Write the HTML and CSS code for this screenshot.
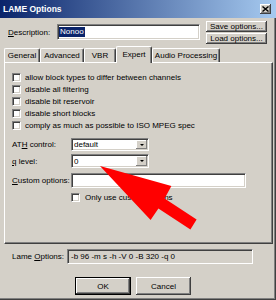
FILE: index.html
```html
<!DOCTYPE html>
<html lang="en">
<head>
  <meta charset="UTF-8" />
  <title>LAME Options</title>
  <link rel="stylesheet" href="styles.css">
</head>
<body>

  <div class="window">
    <div class="titlebar">
      <span class="title">LAME Options</span>
      <span class="close">
        <svg width="7" height="6" viewBox="0 0 7 6"><path d="M0.5 0.5 L6.5 5.5 M6.5 0.5 L0.5 5.5" stroke="#000" stroke-width="1.4"/></svg>
      </span>
    </div>

    <div class="top">
      <span class="desc-label"><u>D</u>escription:</span>
      <div class="textbox desc"><span class="sel">Nonoo</span></div>
      <div class="side-buttons">
        <div class="btn small">Save options...</div>
        <div class="btn small">Load options...</div>
      </div>
    </div>

    <div class="tabs">
      <div class="tab w-general">General</div>
      <div class="tab w-advanced">Advanced</div>
      <div class="tab w-vbr">VBR</div>
      <div class="tab w-expert active">Expert</div>
      <div class="tab w-audio">Audio Processing</div>
    </div>

    <div class="panel">
      <div class="check-row"><span class="box"></span>allow block types to differ between channels</div>
      <div class="check-row"><span class="box"></span>disable all filtering</div>
      <div class="check-row"><span class="box"></span>disable bit reservoir</div>
      <div class="check-row"><span class="box"></span>disable short blocks</div>
      <div class="check-row"><span class="box"></span>comply as much as possible to ISO MPEG spec</div>

      <div class="field-row ath">
        <span class="field-label">AT<u>H</u> control:</span>
        <div class="textbox combo"><span class="value">default</span><span class="drop"><i class="tri"></i></span></div>
      </div>
      <div class="field-row qlevel">
        <span class="field-label"><u>q</u> level:</span>
        <div class="textbox combo"><span class="value">0</span><span class="drop"><i class="tri"></i></span></div>
      </div>
      <div class="field-row custom-row">
        <span class="field-label"><u>C</u>ustom options:</span>
        <div class="textbox custom"></div>
      </div>
      <div class="check-row only"><span class="box"></span>Only use custom options</div>
    </div>

    <div class="lame-row">
      <span class="lame-label">Lame <u>O</u>ptions:</span>
      <div class="textbox lame-field">-b 96 -m s -h -V 0 -B 320 -q 0</div>
    </div>

    <div class="actions">
      <div class="btn default">OK</div>
      <div class="btn cancel">Cancel</div>
    </div>

    <svg class="arrow" width="276" height="300" viewBox="0 0 276 300">
      <polygon points="100,166 171.4,186 164.6,198.4 196.6,219.4 190.4,229.6 158.4,208.6 150.6,220" fill="#ff0000"/>
    </svg>
  </div>

</body>
</html>
```

FILE: styles.css
```css
* {
  box-sizing: border-box;
}

body {
  margin: 0;
  font-family: 'Liberation Sans', Arial, sans-serif;
  font-size: 8px;
  color: #000;
}

.window {
  position: relative;
  width: 276px;
  height: 300px;
  overflow: hidden;
  background: #d4d0c8;
  box-shadow: inset -1px -1px #404040, inset -2px -2px #808080;
}

/* title bar */
.titlebar {
  height: 18px;
  display: flex;
  align-items: center;
  justify-content: space-between;
  padding: 0 5px 0 3px;
  background: linear-gradient(to right, #0a246a, #a6caf0);
}

.title {
  color: #fff;
  font-weight: bold;
  font-size: 8.5px;
}

.close {
  width: 11px;
  height: 10px;
  display: flex;
  align-items: center;
  justify-content: center;
  background: #d4d0c8;
  box-shadow: inset -1px -1px #404040, inset 1px 1px #fff, inset -2px -2px #808080;
}

/* shared controls */
.btn {
  display: flex;
  align-items: center;
  justify-content: center;
  background: #d4d0c8;
  box-shadow: inset -1px -1px #404040, inset 1px 1px #fff, inset -2px -2px #808080;
}

.textbox {
  background: #fff;
  border: 1px solid;
  border-color: #808080 #fff #fff #808080;
  box-shadow: inset 1px 1px #404040, inset -1px -1px #d4d0c8;
}

.box {
  flex: none;
  width: 9px;
  height: 9px;
  background: #fff;
  border: 1px solid;
  border-color: #808080 #fff #fff #808080;
  box-shadow: inset 1px 1px #404040, inset -1px -1px #d4d0c8;
}

/* description row */
.top {
  display: flex;
  align-items: center;
  height: 22px;
  margin-top: 3px;
  padding: 0 9px 0 8px;
}

.desc-label {
  width: 49px;
}

.desc {
  width: 143px;
  height: 16px;
  display: flex;
  align-items: center;
  padding-left: 1px;
}

.sel {
  background: #0a246a;
  color: #fff;
  padding: 0 1px;
  line-height: 10px;
}

.side-buttons {
  margin-left: auto;
  display: flex;
  flex-direction: column;
  gap: 1px;
}

.btn.small {
  width: 61px;
  height: 11px;
}

/* tabs */
.tabs {
  display: flex;
  align-items: flex-end;
  height: 16px;
  margin-top: 3px;
  padding-left: 4px;
}

.tab {
  height: 14px;
  display: flex;
  align-items: center;
  justify-content: center;
  border-top: 1px solid #fff;
  border-left: 1px solid #fff;
  border-right: 1px solid #404040;
  border-radius: 2px 2px 0 0;
  box-shadow: inset -1px 0 #808080;
}

.tab.active {
  height: 17px;
  margin-bottom: -1px;
  padding-bottom: 2px;
  position: relative;
  z-index: 1;
  background: #d4d0c8;
}

.w-general { width: 36px; }
.w-advanced { width: 44px; }
.w-vbr { width: 32px; }
.w-expert { width: 36px; }
.w-audio { width: 68px; }

.panel {
  height: 182px;
  margin: 0 3px 0 4px;
  padding: 8px 0 0 7px;
  border: 1px solid;
  border-color: #fff #404040 #404040 #fff;
  box-shadow: inset -1px -1px #808080;
}

.check-row {
  display: flex;
  align-items: center;
  gap: 4px;
  height: 12px;
}

.field-row {
  display: flex;
  align-items: center;
}

.field-label {
  width: 59px;
}

.ath {
  margin-top: 7px;
  height: 13px;
}

.qlevel {
  margin-top: 3px;
  height: 14px;
}

.custom-row {
  margin-top: 5px;
  height: 15px;
}

.combo {
  width: 78px;
  height: 100%;
  display: flex;
  align-items: stretch;
}

.combo .value {
  flex: 1;
  display: flex;
  align-items: center;
  padding-left: 2px;
}

.combo .drop {
  width: 11px;
  margin: 1px;
  display: flex;
  align-items: center;
  justify-content: center;
  background: #d4d0c8;
  box-shadow: inset -1px -1px #808080, inset 1px 1px #fff;
}

.tri {
  width: 0;
  height: 0;
  border-left: 2px solid transparent;
  border-right: 2px solid transparent;
  border-top: 2px solid #000;
}

.custom {
  width: 175px;
  height: 100%;
}

.check-row.only {
  margin-top: 5px;
  height: 9px;
  padding-left: 59px;
  gap: 5px;
}

/* command line preview */
.lame-row {
  display: flex;
  align-items: center;
  height: 15px;
  margin-top: 5px;
  padding-left: 12px;
}

.lame-label {
  width: 55px;
}

.lame-field {
  width: 186px;
  height: 15px;
  display: flex;
  align-items: center;
  padding-left: 3px;
  background: #d4d0c8;
}

.actions {
  display: flex;
  gap: 5px;
  margin-top: 13px;
  padding-left: 75px;
}

.btn.default {
  width: 56px;
  height: 18px;
  border: 1px solid #000;
}

.btn.cancel {
  width: 55px;
  height: 18px;
}

.arrow {
  position: absolute;
  top: 0;
  left: 0;
  pointer-events: none;
}
```
